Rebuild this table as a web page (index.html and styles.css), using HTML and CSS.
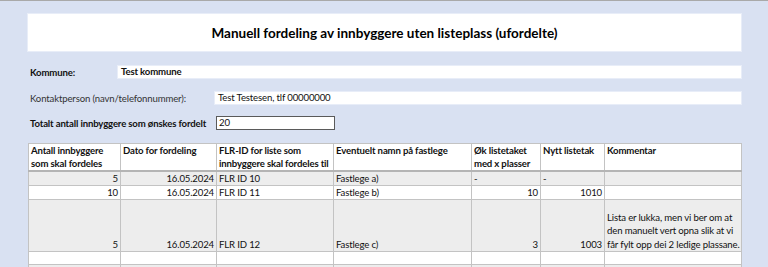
FILE: index.html
```html
<!DOCTYPE html>
<html lang="nn">
<head>
<meta charset="utf-8">
<title>Manuell fordeling av innbyggere uten listeplass</title>
<link rel="stylesheet" href="styles.css">
</head>
<body>
<div class="sheet">
  <div class="title">Manuell fordeling av innbyggere uten listeplass (ufordelte)</div>

  <div class="field field-kommune">
    <div class="label bold">Kommune:</div>
    <div class="value bold">Test kommune</div>
  </div>

  <div class="field field-kontakt">
    <div class="label muted">Kontaktperson (navn/telefonnummer):</div>
    <div class="value">Test Testesen, tlf 00000000</div>
  </div>

  <div class="field field-total">
    <div class="label bold">Totalt antall innbyggere som ønskes fordelt</div>
    <div class="input">20</div>
  </div>

  <table class="grid">
    <colgroup>
      <col class="c1"><col class="c2"><col class="c3"><col class="c4"><col class="c5"><col class="c6"><col class="c7">
    </colgroup>
    <thead>
      <tr>
        <th>Antall innbyggere som skal fordeles</th>
        <th>Dato for fordeling</th>
        <th>FLR-ID for liste som innbyggere skal fordeles til</th>
        <th>Eventuelt namn på fastlege</th>
        <th>Øk listetaket med x plasser</th>
        <th>Nytt listetak</th>
        <th>Kommentar</th>
      </tr>
    </thead>
    <tbody>
      <tr class="r1 shade">
        <td class="num">5</td>
        <td class="num">16.05.2024</td>
        <td>FLR ID 10</td>
        <td>Fastlege a)</td>
        <td>-</td>
        <td>-</td>
        <td></td>
      </tr>
      <tr class="r2">
        <td class="num">10</td>
        <td class="num">16.05.2024</td>
        <td>FLR ID 11</td>
        <td>Fastlege b)</td>
        <td class="num">10</td>
        <td class="num">1010</td>
        <td></td>
      </tr>
      <tr class="r3 shade">
        <td class="num">5</td>
        <td class="num">16.05.2024</td>
        <td>FLR ID 12</td>
        <td>Fastlege c)</td>
        <td class="num">3</td>
        <td class="num">1003</td>
        <td class="wrap">Lista er lukka, men vi ber om at<br>den manuelt vert opna slik at vi<br>får fylt opp dei 2 ledige plassane.</td>
      </tr>
      <tr class="r4">
        <td></td><td></td><td></td><td></td><td></td><td></td><td></td>
      </tr>
      <tr class="r5 shade">
        <td></td><td></td><td></td><td></td><td></td><td></td><td></td>
      </tr>
    </tbody>
  </table>
</div>
</body>
</html>
```

FILE: styles.css
```css
html, body {
  margin: 0;
  padding: 0;
}

body {
  background: #d9e1f2;
  border-top: 1px solid #a9a9a9;
  font-family: "Lato", "Open Sans", sans-serif;
  font-size: 9.6px;
  letter-spacing: -0.15px;
  color: #111;
  overflow: hidden;
  height: 266px;
}

.sheet {
  width: 713px;
  margin-left: 28px;
  padding-top: 13px;
}

.title {
  background: #fff;
  height: 37px;
  display: flex;
  align-items: center;
  justify-content: center;
  font-weight: 700;
  font-size: 13.5px;
  letter-spacing: 0;
  color: #000;
  box-shadow: 0 0 0 1px #e8edf8;
}

.bold {
  font-weight: 700;
}

.muted {
  color: #333;
}

.field {
  display: flex;
  align-items: center;
}

.field .label {
  padding-left: 2px;
  white-space: nowrap;
  box-sizing: border-box;
}

.field .value {
  flex: 1;
  background: #fff;
  height: 12px;
  line-height: 12px;
  padding-left: 3px;
  box-shadow: 0 0 0 1px #e8edf8;
}

.field-kommune {
  margin-top: 15px;
}

.field-kommune .label {
  width: 90px;
}

.field-kontakt {
  margin-top: 14px;
}

.field-kontakt .label {
  width: 187px;
}

.field-total {
  margin-top: 12px;
}

.field-total .label {
  width: 188px;
}

.field-total .input {
  width: 115px;
  height: 12px;
  line-height: 12px;
  background: #fff;
  border: 1px solid #5a5a5a;
  padding-left: 2px;
  box-sizing: content-box;
}

.grid {
  margin-top: 13px;
  width: 713px;
  border-collapse: collapse;
  table-layout: fixed;
  background: #fff;
}

.grid col.c1 { width: 92px; }
.grid col.c2 { width: 96px; }
.grid col.c3 { width: 117px; }
.grid col.c4 { width: 138px; }
.grid col.c5 { width: 69px; }
.grid col.c6 { width: 64px; }
.grid col.c7 { width: 137px; }

.grid th,
.grid td {
  border: 1px solid #c3c3c3;
  padding: 0 2px;
  line-height: 13px;
  overflow: hidden;
  white-space: nowrap;
  text-align: left;
}

.grid th {
  font-weight: 700;
  vertical-align: top;
  white-space: normal;
  height: 24px;
  border-bottom: 2px solid #b4b4b4;
}

.grid td {
  vertical-align: bottom;
}

.grid td.num {
  text-align: right;
}

.grid td.wrap {
  line-height: 13.5px;
}

.grid tr.shade td {
  background: #ededed;
}

.grid tr.r1 td { height: 13px; }
.grid tr.r2 td { height: 12px; }
.grid tr.r3 td { height: 51px; }
.grid tr.r4 td { height: 12px; }
.grid tr.r5 td { height: 12px; }
```
